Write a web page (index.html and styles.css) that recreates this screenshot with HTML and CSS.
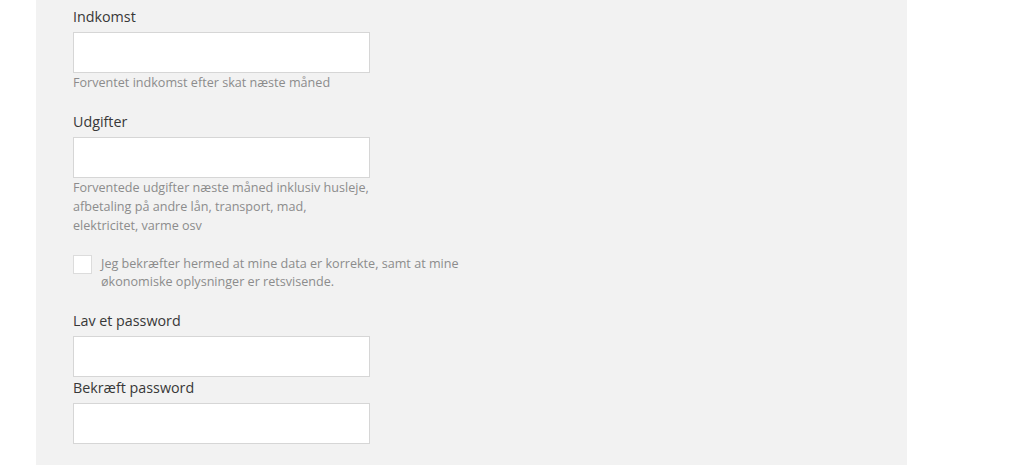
FILE: index.html
```html
<!DOCTYPE html>
<html lang="da">
<head>
    <meta charset="UTF-8">
    <meta name="viewport" content="width=device-width, initial-scale=1.0">
    <title>Ansøgning</title>
    <link rel="stylesheet" href="styles.css">
</head>
<body>
    <div class="panel">
        <div class="form-group">
            <label for="income">Indkomst</label>
            <input type="text" id="income">
            <p class="help">Forventet indkomst efter skat næste måned</p>
        </div>
        <div class="form-group">
            <label for="expenses">Udgifter</label>
            <input type="text" id="expenses">
            <p class="help">Forventede udgifter næste måned inklusiv husleje, afbetaling på andre lån, transport, mad, elektricitet, varme osv</p>
        </div>
        <div class="confirm">
            <input type="checkbox" id="confirm">
            <label for="confirm">Jeg bekræfter hermed at mine data er korrekte, samt at mine økonomiske oplysninger er retsvisende.</label>
        </div>
        <div class="form-group tight">
            <label for="password">Lav et password</label>
            <input type="password" id="password">
        </div>
        <div class="form-group">
            <label for="password2">Bekræft password</label>
            <input type="password" id="password2">
        </div>
    </div>
</body>
</html>
```

FILE: styles.css
```css
body {
    font-family: "Open Sans", Lato, Arial, sans-serif;
    margin: 0;
    padding: 0;
    background-color: white;
}
.panel {
    background-color: #f2f2f2;
    width: 834px;
    min-height: 465px;
    margin-left: 36px;
    padding: 7px 0 0 37px;
    box-sizing: content-box;
}
.form-group {
    margin-bottom: 20px;
}
.form-group.tight {
    margin-bottom: 1px;
}
.form-group label {
    display: block;
    font-size: 14.3px;
    line-height: 20px;
    color: #383838;
    margin-bottom: 5px;
}
.form-group input {
    display: block;
    width: 297px;
    height: 41px;
    box-sizing: border-box;
    border: 1px solid #d6d6d6;
    background-color: white;
    margin: 0;
}
.help {
    margin: 0;
    width: 300px;
    font-size: 12.6px;
    line-height: 19px;
    color: #8c8c8c;
}
.confirm {
    display: flex;
    align-items: flex-start;
    margin-bottom: 20px;
}
.confirm input {
    appearance: none;
    width: 19px;
    height: 19px;
    margin: 0 9px 0 0;
    border: 1px solid #dcdcdc;
    background-color: white;
    flex-shrink: 0;
}
.confirm label {
    width: 390px;
    font-size: 12.6px;
    line-height: 18px;
    color: #8c8c8c;
}
```
